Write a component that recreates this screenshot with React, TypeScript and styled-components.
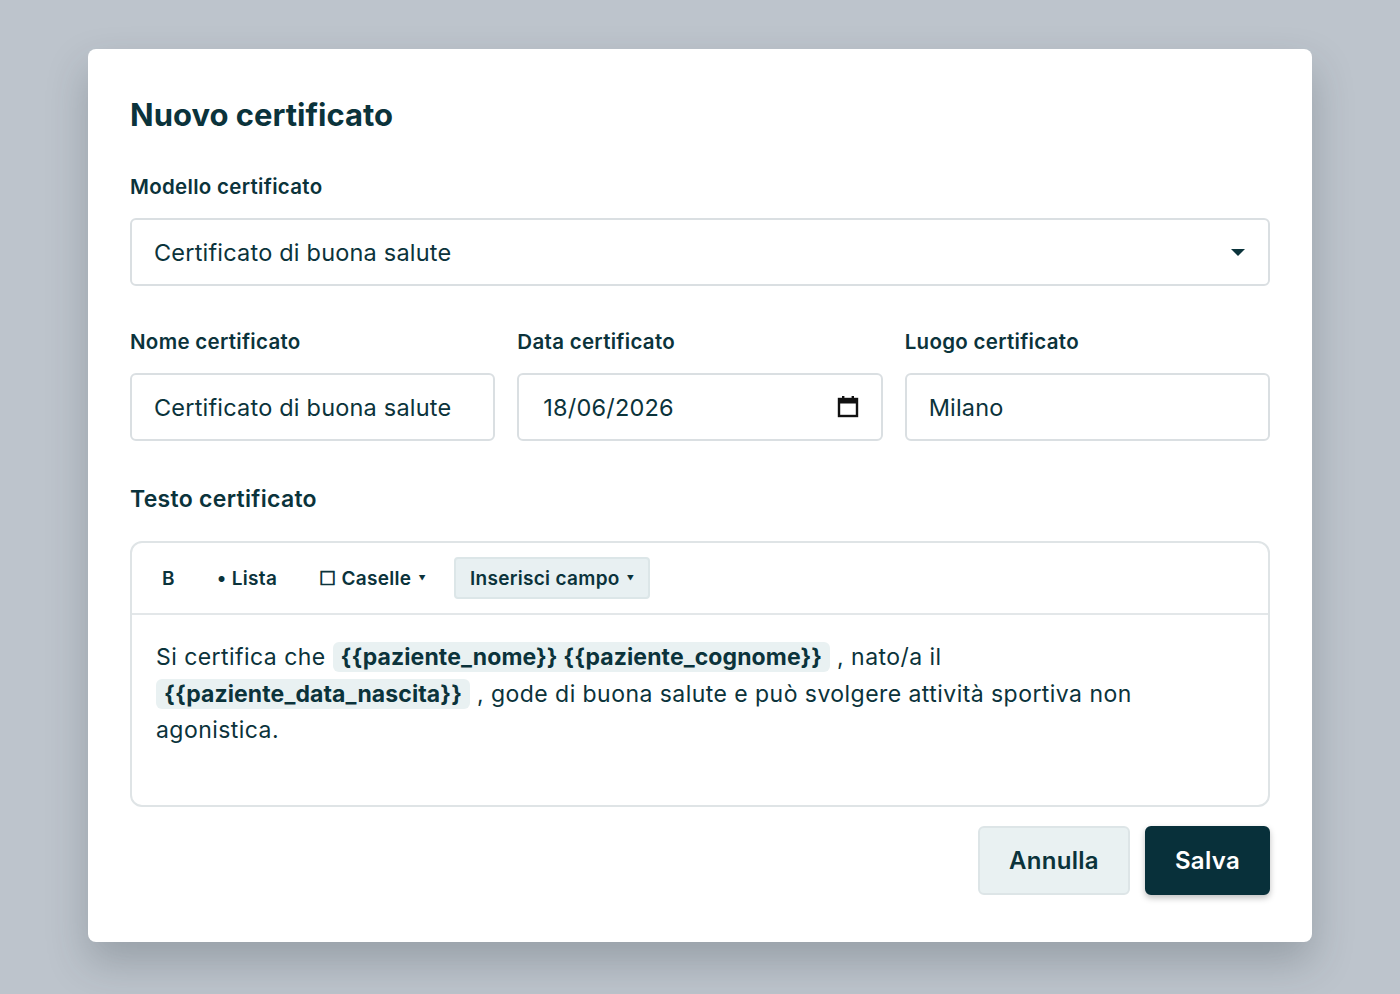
import React from "react";
import styled, { createGlobalStyle } from "styled-components";

const G = createGlobalStyle`
  html,body{margin:0;background:#bdc4cc;font-family:Inter,"Noto Sans",sans-serif;color:#0b333b;}
  *{box-sizing:border-box;}
`;
const Page = styled.div`height:994px;padding:49px 88px 0;`;
const Modal = styled.div`
  background:#fff;border-radius:8px;height:893px;padding:44px 42px 0;
  box-shadow:0 20px 40px rgba(40,50,60,0.25);display:flex;flex-direction:column;
`;
const Title = styled.h1`margin:0 0 36px;font-size:31px;font-weight:700;line-height:44px;`;
const Label = styled.div<{ $big?: boolean }>`
  font-size:${p => (p.$big ? 23 : 20.5)}px;font-weight:600;line-height:28px;letter-spacing:0.3px;
  margin-bottom:${p => (p.$big ? 28 : 17)}px;
`;
const Field = styled.div`
  height:68px;border:2px solid #dadfe2;border-radius:6px;display:flex;align-items:center;
  padding:0 22px;font-size:23.5px;letter-spacing:0.2px;justify-content:space-between;
`;
const Row = styled.div`display:grid;grid-template-columns:repeat(3,1fr);gap:22px;margin-top:42px;margin-bottom:44px;`;
const Col = styled.div`display:flex;flex-direction:column;`;
const Editor = styled.div`border:2px solid #dfe4e6;border-radius:12px;height:266px;display:flex;flex-direction:column;`;
const Toolbar = styled.div`height:72px;border-bottom:2px solid #e3e7e9;display:flex;align-items:center;padding:0 16px;gap:4px;`;
const Tool = styled.div<{ $active?: boolean }>`
  font-size:19px;font-weight:600;letter-spacing:0.3px;height:42px;display:flex;align-items:center;
  padding:0 ${p => (p.$active ? 14 : 14)}px;margin-right:${p => (p.$active ? 0 : 10)}px;
  border-radius:4px;${p => p.$active && "background:#e8f0f2;border:2px solid #dce6e8;"}
`;
const Caret = styled.span`font-size:7px;margin-left:7px;`;
const Body = styled.div`padding:24px 24px;font-size:23px;letter-spacing:0.45px;line-height:36.5px;`;
const Chip = styled.span`background:#e9f1f2;font-weight:700;letter-spacing:0.1px;padding:1px 8px;border-radius:6px;`;
const Actions = styled.div`display:flex;justify-content:flex-end;gap:15px;margin-top:19px;`;
const Btn = styled.button<{ $primary?: boolean }>`
  height:69px;padding:0 ${p => (p.$primary ? 28 : 29)}px;border-radius:6px;font-family:inherit;font-size:24px;font-weight:600;
  letter-spacing:0.3px;
  background:${p => (p.$primary ? "#08303a" : "#e9f1f2")};color:${p => (p.$primary ? "#fff" : "#0b333b")};
  border:2px solid ${p => (p.$primary ? "#08303a" : "#dde5e7")};
  box-shadow:${p => (p.$primary ? "0 3px 6px rgba(0,0,0,0.25)" : "none")};
`;

export default function App() {
  return (
    <Page>
      <G />
      <Modal>
        <Title>Nuovo certificato</Title>
        <Label>Modello certificato</Label>
        <Field>
          Certificato di buona salute
          <svg width="16" height="10" viewBox="0 0 16 10"><path d="M1 2h14L8 9z" fill="#0b333b" /></svg>
        </Field>
        <Row>
          <Col><Label>Nome certificato</Label><Field>Certificato di buona salute</Field></Col>
          <Col>
            <Label>Data certificato</Label>
            <Field>
              <span style={{ paddingLeft: 2 }}>18/06/2026</span>
              <svg width="22" height="24" viewBox="0 0 22 24">
                <rect x="2" y="4" width="18" height="17" fill="none" stroke="#111" strokeWidth="2.4" />
                <rect x="2" y="4" width="18" height="4.5" fill="#111" />
                <rect x="5" y="1" width="2.4" height="4" fill="#111" />
                <rect x="14.6" y="1" width="2.4" height="4" fill="#111" />
              </svg>
            </Field>
          </Col>
          <Col><Label>Luogo certificato</Label><Field>Milano</Field></Col>
        </Row>
        <Label $big>Testo certificato</Label>
        <Editor>
          <Toolbar>
            <Tool>B</Tool>
            <Tool>• Lista</Tool>
            <Tool>☐ Caselle<Caret>▼</Caret></Tool>
            <Tool $active>Inserisci campo<Caret>▼</Caret></Tool>
          </Toolbar>
          <Body>
            Si certifica che <Chip>{"{{paziente_nome}} {{paziente_cognome}}"}</Chip> , nato/a il
            <br />
            <Chip>{"{{paziente_data_nascita}}"}</Chip> , gode di buona salute e può svolgere attività sportiva non agonistica.
          </Body>
        </Editor>
        <Actions>
          <Btn>Annulla</Btn>
          <Btn $primary>Salva</Btn>
        </Actions>
      </Modal>
    </Page>
  );
}
